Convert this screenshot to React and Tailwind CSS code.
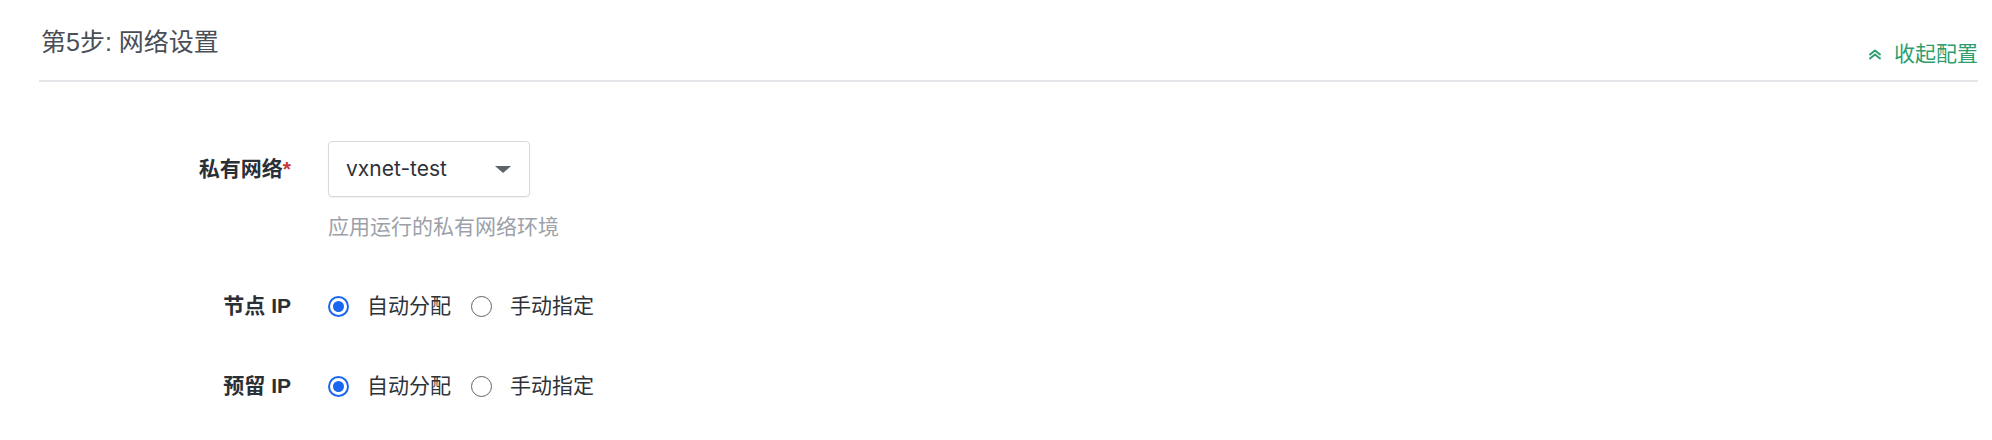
import React from "react";

const font = { fontFamily: '"Liberation Sans", "Noto Sans CJK SC", sans-serif' };

function Radio({ checked, label }) {
  return (
    <label className="flex items-center gap-[18px] cursor-pointer">
      {checked ? (
        <span className="w-[21px] h-[21px] rounded-full border-[2px] border-[#1a66f0] flex items-center justify-center">
          <span className="w-[11px] h-[11px] rounded-full bg-[#1a66f0]" />
        </span>
      ) : (
        <span className="w-[21px] h-[21px] rounded-full border-[1.5px] border-[#5f6266]" />
      )}
      <span className="text-[21px] leading-[28px] text-[#2e3239]">{label}</span>
    </label>
  );
}

function RadioGroup() {
  return (
    <div className="flex items-center gap-[20px]">
      <Radio checked label="自动分配" />
      <Radio label="手动指定" />
    </div>
  );
}

function Label({ children, required }) {
  return (
    <div className="w-[252px] shrink-0 text-right text-[21px] leading-[28px] font-bold text-[#2b2f36]">
      {children}
      {required && <span className="text-[#c8372f]">*</span>}
    </div>
  );
}

export default function App() {
  return (
    <div className="bg-white w-[1992px] h-[440px] pl-[39px] pr-[14px]" style={font}>
      <div className="h-[80px] flex justify-between">
        <div className="mt-[26px] ml-[2px] text-[25px] leading-[32px] text-[#4a4e56]">第5步: 网络设置</div>
        <div className="self-end mb-[12px] flex items-center gap-[12px] text-[21px] leading-[28px] text-[#2f9e6f]">
          <svg width="14" height="11" viewBox="0 0 14 11" fill="none" stroke="#2f9e6f" strokeWidth="2" strokeLinecap="round" strokeLinejoin="round">
            <path d="M2 5.5 L7 1.5 L12 5.5" />
            <path d="M2 9.5 L7 5.5 L12 9.5" />
          </svg>
          <span>收起配置</span>
        </div>
      </div>
      <div className="border-b-2 border-[#e4e6e9]" />

      <div className="mt-[59px] flex flex-col">
        <div className="flex items-start gap-[37px]">
          <div className="mt-[14px]">
            <Label required>私有网络</Label>
          </div>
          <div className="flex flex-col">
            <div className="w-[202px] h-[56px] border border-[#d5d9df] rounded-[4px] shadow-[0_1px_2px_rgba(0,0,0,0.06)] flex items-center justify-between pl-[17px] pr-[18px]">
              <span className="text-[21px] text-[#2e3239]" style={{ fontFamily: 'Inter, "Liberation Sans", sans-serif' }}>vxnet-test</span>
              <svg width="16" height="7" viewBox="0 0 16 7">
                <path d="M0 0 H16 L8 7 Z" fill="#5f636a" />
              </svg>
            </div>
            <div className="mt-[16px] text-[21px] leading-[28px] text-[#9ca1a9]">应用运行的私有网络环境</div>
          </div>
        </div>

        <div className="mt-[51px] flex items-center gap-[37px]">
          <Label>节点 IP</Label>
          <RadioGroup />
        </div>

        <div className="mt-[52px] flex items-center gap-[37px]">
          <Label>预留 IP</Label>
          <RadioGroup />
        </div>
      </div>
    </div>
  );
}
